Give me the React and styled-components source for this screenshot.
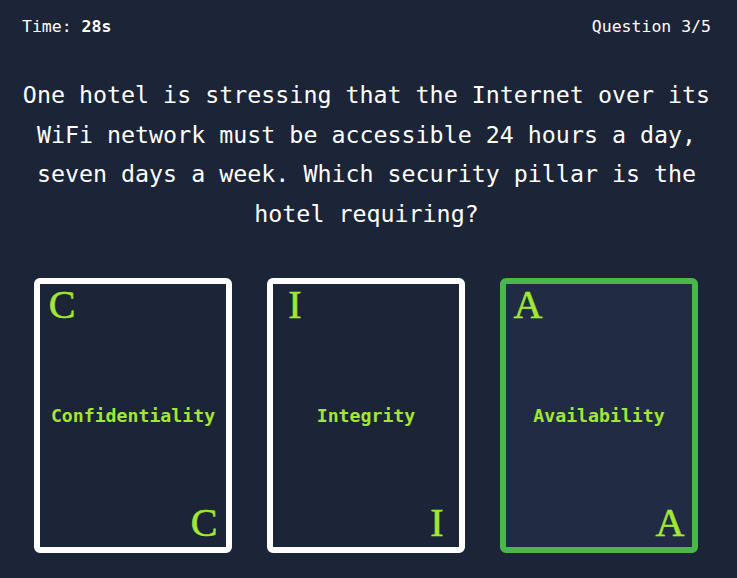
import React from "react";
import styled, { createGlobalStyle } from "styled-components";

const Global = createGlobalStyle`
  html, body { margin: 0; padding: 0; background: #1c2437; }
  body { font-family: "DejaVu Sans Mono", monospace; color: #ffffff; }
`;

const Page = styled.div`
  min-height: 578px;
  box-sizing: border-box;
  padding: 17px 26px 0 22px;
  background: #1c2437;
`;

const Header = styled.div`
  display: flex;
  justify-content: space-between;
  font-size: 16.5px;
  line-height: 20px;
`;

const Strong = styled.span`
  font-weight: bold;
`;

const Question = styled.p`
  margin: 38px 0 0;
  text-align: center;
  font-size: 23.3px;
  line-height: 39.5px;
`;

const Cards = styled.div`
  display: grid;
  grid-template-columns: repeat(3, 198px);
  gap: 35px;
  justify-content: start;
  padding-left: 12px;
  margin-top: 45px;
`;

const Card = styled.div`
  position: relative;
  box-sizing: border-box;
  height: 275px;
  border: 6px solid ${(p) => (p.$selected ? "#4bb749" : "#ffffff")};
  border-radius: 6px;
  background: ${(p) => (p.$selected ? "#212b44" : "#1c2437")};
  display: flex;
  align-items: center;
  justify-content: center;
`;

const Corner = styled.span`
  position: absolute;
  width: 44px;
  text-align: center;
  font-family: "Liberation Serif", serif;
  font-size: 40px;
  line-height: 1;
  color: #a3e635;
  -webkit-text-stroke: 0.6px #a3e635;
  ${(p) => (p.$bottom ? "bottom: 4px; right: 0;" : "top: 1px; left: 0;")}
`;

const Label = styled.span`
  font-size: 18.2px;
  font-weight: bold;
  color: #a3e635;
`;

const options = [
  { letter: "C", label: "Confidentiality" },
  { letter: "I", label: "Integrity" },
  { letter: "A", label: "Availability", selected: true },
];

export default function App() {
  return (
    <Page>
      <Global />
      <Header>
        <span>
          Time: <Strong>28s</Strong>
        </span>
        <span>Question 3/5</span>
      </Header>
      <Question>
        One hotel is stressing that the Internet over its WiFi network must be
        accessible 24 hours a day, seven days a week. Which security pillar is
        the hotel requiring?
      </Question>
      <Cards>
        {options.map((o) => (
          <Card key={o.letter} $selected={o.selected}>
            <Corner>{o.letter}</Corner>
            <Label>{o.label}</Label>
            <Corner $bottom>{o.letter}</Corner>
          </Card>
        ))}
      </Cards>
    </Page>
  );
}
